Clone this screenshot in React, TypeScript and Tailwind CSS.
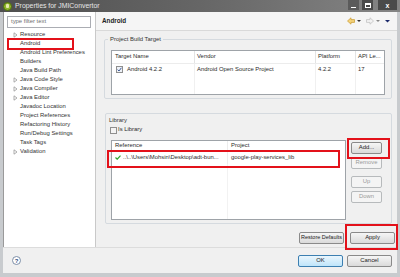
import React from "react";

function Arrow() {
  return (
    <svg width="5" height="6" viewBox="0 0 5 6" className="shrink-0">
      <path d="M1 0.8 L4 3 L1 5.2 Z" fill="none" stroke="#9a9a9a" strokeWidth="0.8" />
    </svg>
  );
}

function Btn({ children, w, disabled, def }: { children: React.ReactNode; w: string; disabled?: boolean; def?: boolean }) {
  const base = "flex items-center justify-center rounded-[2px] border h-[12px] whitespace-nowrap overflow-hidden " + w;
  if (disabled)
    return <div className={base + " border-[#b7babc] bg-[#f4f4f4] text-[#9a9a9a]"}>{children}</div>;
  if (def)
    return (
      <div className={base + " border-[#3c7fb1] bg-linear-to-b from-[#eaf6fd] to-[#bfe5fa] text-[#222]"}>{children}</div>
    );
  return (
    <div className={base + " border-[#8a8a8a] bg-linear-to-b from-[#f6f6f6] to-[#dadada] text-[#222]"}>{children}</div>
  );
}

const tree: [string, boolean][] = [
  ["Resource", true],
  ["Android", false],
  ["Android Lint Preferences", false],
  ["Builders", false],
  ["Java Build Path", false],
  ["Java Code Style", true],
  ["Java Compiler", true],
  ["Java Editor", true],
  ["Javadoc Location", false],
  ["Project References", false],
  ["Refactoring History", false],
  ["Run/Debug Settings", false],
  ["Task Tags", false],
  ["Validation", true],
];

export default function App() {
  return (
    <div className="relative w-[400px] h-[277px] overflow-hidden bg-[#f0f0f0] flex flex-col whitespace-nowrap font-['Liberation_Sans',Arial,sans-serif] text-[5.9px] leading-none text-[#2b2b2b]">
      {/* Title bar */}
      <div className="h-[12px] shrink-0 flex items-center bg-linear-to-r from-[#4f4f4f] via-[#666] to-[#858585]">
        <div className="ml-[3px] w-[9px] h-[9px] rounded-full bg-[#8fb52a] border border-[#4d6b10] flex items-center justify-center">
          <div className="w-[3px] h-[4px] bg-[#e8e8b0] rounded-[1px]" />
        </div>
        <span className="ml-[3px] text-[#e6e6e6] text-[6.9px]">Properties for JMIConvertor</span>
        <div className="flex-1" />
        <div className="flex items-start h-full">
          <div className="w-[11px] h-[10px] bg-[#5b5b5b] flex items-end justify-center pb-[2px] mr-[3px]">
            <div className="w-[5px] h-[1.5px] bg-white" />
          </div>
          <div className="w-[11px] h-[10px] bg-[#4a4a4a] flex items-center justify-center mr-[5px]">
            <div className="w-[6px] h-[5px] border border-white border-t-2" />
          </div>
          <div className="w-[19px] h-[10px] bg-[#4a4a4a] flex items-center justify-center text-white font-bold text-[7px] mr-[3px]">
            x
          </div>
        </div>
      </div>

      {/* Body with frame */}
      <div className="flex-1 flex flex-col border-l-[3px] border-r-[3px] border-b-[4px] border-[#c8cbce]">
        <div className="h-[235px] flex border-l border-[#9a9a9a]">
          {/* Left panel */}
          <div className="w-[92px] bg-white border-r border-[#c9c9c9] flex flex-col pt-[4px]">
            <div className="ml-[3px] w-[84px] h-[12px] border border-[#abadb3] flex items-center pl-[3px] text-[#6d6d6d]">
              type filter text
            </div>
            <div className="mt-[2px] flex flex-col">
              {tree.map(([t, a]) => (
                <div key={t} className="h-[9px] flex items-center">
                  <div className="w-[16px] flex justify-end pr-[2px]">{a ? <Arrow /> : null}</div>
                  <span className="text-[#333]">{t}</span>
                </div>
              ))}
            </div>
          </div>

          {/* Right panel */}
          <div className="flex-1 flex flex-col bg-[#f0f0f0]">
            <div className="h-[19px] shrink-0 flex items-center border-b border-[#d9d9d9] bg-[#f5f5f5] pl-[6px] pr-[6px]">
              <span className="font-bold text-[6.3px] text-[#222]">Android</span>
              <div className="flex-1" />
              <svg width="44" height="8" viewBox="0 0 44 8">
                <path d="M0.5 4 L4 0.8 V2.6 H7.5 V5.4 H4 V7.2 Z" fill="#f4d27a" stroke="#c99a2e" strokeWidth="0.7" />
                <path d="M10 3 H14 L12 5 Z" fill="#333" />
                <path d="M26.5 4 L23 0.8 V2.6 H19.5 V5.4 H23 V7.2 Z" fill="#f2f2f2" stroke="#bdbdbd" strokeWidth="0.7" />
                <path d="M29 3 H33 L31 5 Z" fill="#888" />
                <path d="M38 3 H43 L40.5 5.5 Z" fill="#1c2a6b" />
              </svg>
            </div>

            <div className="flex-1 flex flex-col pl-[8px] pr-[5px]">
              {/* Project Build Target */}
              <fieldset className="mt-[6px] h-[62px] border border-[#d5dadf] rounded-[2px] px-[6px] pt-[7px]">
                <legend className="ml-[-3px] px-[2px] text-[#333]">Project Build Target</legend>
                <div className="h-[45px] border border-[#9ea3a8] bg-white flex flex-col">
                  <div className="h-[13px] flex border-b border-[#ececec]">
                    <div className="w-[83px] pl-[3px] flex items-center border-r border-[#e3e3e3]">Target Name</div>
                    <div className="w-[121px] pl-[2px] flex items-center border-r border-[#e3e3e3]">Vendor</div>
                    <div className="w-[40px] pl-[2px] flex items-center border-r border-[#e3e3e3]">Platform</div>
                    <div className="flex-1 pl-[2px] flex items-center">API Le...</div>
                  </div>
                  <div className="flex-1 flex">
                    <div className="w-[83px] border-r border-[#f0f0f0] flex items-start pt-[2px] pl-[4px]">
                      <div className="w-[7px] h-[7px] border border-[#8f8f8f] bg-[#eef2f8] flex items-center justify-center mr-[4px]">
                        <svg width="5" height="5" viewBox="0 0 5 5">
                          <path d="M0.6 2.6 L2 4 L4.4 0.8" fill="none" stroke="#3d5a99" strokeWidth="1" />
                        </svg>
                      </div>
                      <span className="mt-[1px]">Android 4.2.2</span>
                    </div>
                    <div className="w-[121px] border-r border-[#f0f0f0] pl-[2px] pt-[3px]">Android Open Source Project</div>
                    <div className="w-[40px] border-r border-[#f0f0f0] pl-[2px] pt-[3px]">4.2.2</div>
                    <div className="flex-1 pl-[2px] pt-[3px]">17</div>
                  </div>
                </div>
              </fieldset>

              {/* Library */}
              <div className="mt-[14px] ml-[1px] h-[111px] border border-[#d5dadf] rounded-[2px] flex flex-col pl-[2px] pr-[5px]">
                <div className="mt-[4px] pl-[1px] text-[#333]">Library</div>
                <div className="mt-[3px] ml-[2px] flex items-center">
                  <div className="w-[7px] h-[7px] border border-[#8f8f8f] bg-[#f4f4f4] mr-[1px]" />
                  <span>Is Library</span>
                </div>
                <div className="mt-[6px] flex pl-[3px]">
                  <div className="w-[235px] h-[80px] border border-[#9ea3a8] bg-white flex flex-col">
                    <div className="h-[11px] flex">
                      <div className="w-[116px] pl-[3px] flex items-center border-r border-[#ececec]">Reference</div>
                      <div className="flex-1 pl-[3px] flex items-center">Project</div>
                    </div>
                    <div className="h-[12px] flex">
                      <div className="w-[116px] pl-[3px] flex items-center border-r border-[#ececec]">
                        <svg width="6" height="5" viewBox="0 0 6 5" className="mr-[2px]">
                          <path d="M0.5 2.5 L2.2 4.2 L5.5 0.6" fill="none" stroke="#2fa82f" strokeWidth="1.2" />
                        </svg>
                        <span>..\..\Users\Mohsin\Desktop\adt-bun...</span>
                      </div>
                      <div className="flex-1 pl-[3px] flex items-center">google-play-services_lib</div>
                    </div>
                    <div className="flex-1 flex">
                      <div className="w-[116px] border-r border-[#f2f2f2]" />
                    </div>
                  </div>
                  <div className="ml-[5px] mt-[2px] flex flex-col">
                    <Btn w="w-[31px]">Add...</Btn>
                    <div className="mt-[3px]">
                      <Btn w="w-[31px]" disabled>Remove</Btn>
                    </div>
                    <div className="mt-[7px]">
                      <Btn w="w-[31px]" disabled>Up</Btn>
                    </div>
                    <div className="mt-[3px]">
                      <Btn w="w-[31px]" disabled>Down</Btn>
                    </div>
                  </div>
                </div>
              </div>

              <div className="mt-[8px] mr-[-3px] flex justify-end gap-[6px]">
                <Btn w="w-[45px]">
                  <span className="text-[5.5px]">Restore Defaults</span>
                </Btn>
                <Btn w="w-[45px]">Apply</Btn>
              </div>
            </div>
          </div>
        </div>

        {/* Bottom bar */}
        <div className="flex-1 flex items-center border-t border-[#dcdcdc] bg-[#f0f0f0] pl-[9px] pr-[5px]">
          <div className="w-[9px] h-[9px] rounded-full border border-[#7d8fa8] bg-white flex items-center justify-center text-[6px] font-bold text-[#2c4a7a]">
            ?
          </div>
          <div className="flex-1" />
          <div className="flex gap-[4px]">
            <Btn w="w-[45px]" def>OK</Btn>
            <Btn w="w-[45px]">Cancel</Btn>
          </div>
        </div>
      </div>

      {/* Red annotation boxes */}
      <div className="absolute left-[7px] top-[38px] w-[67px] h-[12px] border-2 border-[#e3111a]" />
      <div className="absolute left-[107px] top-[150px] w-[233px] h-[18px] border-2 border-[#e3111a]" />
      <div className="absolute left-[347px] top-[138px] w-[43px] h-[21px] border-2 border-[#e3111a]" />
      <div className="absolute left-[345px] top-[224px] w-[53px] h-[26px] border-2 border-[#e3111a]" />
    </div>
  );
}
